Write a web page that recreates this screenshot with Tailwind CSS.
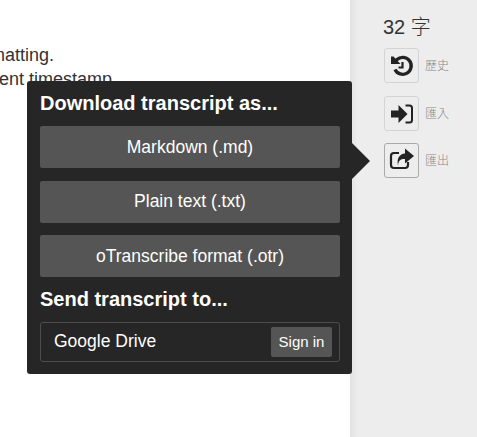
<!DOCTYPE html>
<html lang="en">
<head>
  <meta charset="UTF-8" />
  <title>oTranscribe</title>
  <script src="https://cdn.jsdelivr.net/npm/@tailwindcss/browser@4"></script>
</head>
<body class="bg-white font-['Liberation_Sans','Noto_Sans_CJK_TC',sans-serif] overflow-hidden">
  <div class="relative flex w-[477px] h-[437px]">
    <!-- editor -->
    <main class="w-[350px] h-full overflow-hidden text-[18px] leading-[24px] text-[#333] pt-[43px]">
      <p class="ml-[-68px] whitespace-nowrap">Use formatting.</p>
      <p class="ml-[-82px] whitespace-nowrap">Insert current timestamp.</p>
    </main>

    <!-- sidebar -->
    <aside class="w-[127px] h-full bg-[#ededed] bg-gradient-to-r from-[#e2e2e2] to-[#ededed] to-[8px] pl-[34px] pt-[14px] text-[#333]">
      <div class="text-[20px] leading-[26px] font-light mb-[8px] ml-[-1px]">32 字</div>
      <div class="flex flex-col gap-[13px]">
        <div class="flex items-center gap-[6px]">
          <button class="w-[35px] h-[35px] flex items-center justify-center border border-[#d4d4d4] rounded-[3px]">
            <svg width="24" height="24" viewBox="0 0 24 24" fill="none" stroke="#222" stroke-width="3.4">
              <path d="M5 15.500a8.500 8.500 0 1 0 2-10L3.500 9" />
              <path d="M1 2.500h2.500l7 7.500H1z" fill="#222" stroke="none" />
              <path d="M12.500 8v5.500H8.500" stroke-width="2.200" />
            </svg>
          </button>
          <span class="text-[12px] font-light text-[#888]">歷史</span>
        </div>
        <div class="flex items-center gap-[6px]">
          <button class="w-[35px] h-[35px] flex items-center justify-center border border-[#d4d4d4] rounded-[3px]">
            <svg width="24" height="24" viewBox="0 0 24 24">
              <path d="M1 8.500h7.500V3L17.500 12l-9 9v-5.500H1z" fill="#222" />
              <path d="M15.500 3.500h4A2.500 2.500 0 0 1 22 6v12a2.500 2.500 0 0 1-2.500 2.500h-4" fill="none" stroke="#222" stroke-width="2" />
            </svg>
          </button>
          <span class="text-[12px] font-light text-[#888]">匯入</span>
        </div>
        <div class="flex items-center gap-[6px] mt-[-1px]">
          <button class="w-[35px] h-[35px] flex items-center justify-center border border-[#aaa] rounded-[3px]">
            <svg width="26" height="26" viewBox="0 0 26 26">
              <path d="M16 .5 25 8l-9 7.500V11c-4.500-.2-6.500 1.500-7 6.500-1.500-7 1.500-11.500 7-12z" fill="#222" />
              <path d="M10 5H5a3 3 0 0 0-3 3v9a3 3 0 0 0 3 3h11a3 3 0 0 0 3-3v-3" fill="none" stroke="#222" stroke-width="2.200" />
            </svg>
          </button>
          <span class="text-[12px] font-light text-[#888]">匯出</span>
        </div>
      </div>
    </aside>

    <!-- export popover -->
    <div class="absolute left-[27px] top-[81px] w-[325px] h-[293px] bg-[#262626] rounded-[3px] pl-[13px] pr-[12px] text-white">
      <div class="absolute right-[-18px] top-[62px] w-0 h-0 border-y-[18px] border-y-transparent border-l-[18px] border-l-[#262626]"></div>
      <h3 class="text-[20px] leading-[24px] font-bold pt-[10px] mb-[11px]">Download transcript as...</h3>
      <div class="flex flex-col gap-[12.500px]">
        <button class="h-[42px] bg-[#555] rounded-[2px] text-[17.500px] text-center">Markdown (.md)</button>
        <button class="h-[42px] bg-[#555] rounded-[2px] text-[17.500px] text-center">Plain text (.txt)</button>
        <button class="h-[42px] bg-[#555] rounded-[2px] text-[17.500px] text-center">oTranscribe format (.otr)</button>
      </div>
      <h3 class="text-[20px] leading-[24px] font-bold mt-[10px] mb-[11px]">Send transcript to...</h3>
      <div class="h-[40px] border border-[#4d4d4d] rounded-[3px] flex items-center justify-between pl-[13px] pr-[7px]">
        <span class="text-[17.500px] mb-[2px]">Google Drive</span>
        <button class="w-[61px] h-[30px] bg-[#555] rounded-[2px] text-[15px]">Sign in</button>
      </div>
    </div>
  </div>
</body>
</html>
